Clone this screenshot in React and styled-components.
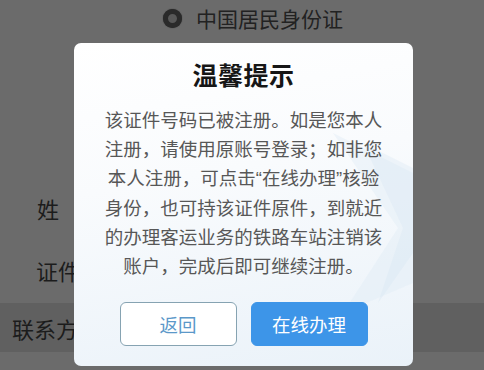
import React from 'react';
import styled, { createGlobalStyle } from 'styled-components';

const GlobalStyle = createGlobalStyle`
  html, body {
    margin: 0;
    padding: 0;
    background: #6b6b6b;
  }
  body {
    font-family: "Noto Sans CJK SC", "Noto Sans", sans-serif;
  }
`;

const Page = styled.div`
  position: relative;
  width: 484px;
  height: 370px;
  overflow: hidden;
  background: #6b6b6b;
`;

const RadioRow = styled.div`
  height: 36px;
  display: flex;
  align-items: center;
  gap: 14px;
  padding-left: 163px;
  color: #222;
  font-size: 21px;
`;

const RadioDot = styled.span`
  width: 9px;
  height: 9px;
  border-radius: 50%;
  border: 5px solid #2a2a2a;
  background: #585858;
  box-shadow: 0 0 1px #222;
`;

const Form = styled.div`
  padding-top: 141px;
  display: flex;
  flex-direction: column;
`;

const FieldRow = styled.div`
  height: ${({ $band }) => ($band ? '49px' : '62px')};
  display: flex;
  align-items: center;
  padding-left: ${({ $indent }) => $indent}px;
  font-size: 22px;
  color: #1c1c1c;
  background: ${({ $band }) => ($band ? '#606060' : 'transparent')};
  margin-top: ${({ $band }) => ($band ? '2px' : '0')};
`;

const Dialog = styled.div`
  position: absolute;
  left: 74px;
  top: 43px;
  width: 339px;
  height: 323px;
  box-sizing: border-box;
  border-radius: 7px;
  overflow: hidden;
  background: linear-gradient(170deg, #ffffff 0%, #f9fbfd 40%, #eaf2f9 100%);
  padding: 16px 0 20px;
  display: flex;
  flex-direction: column;
  align-items: center;
`;

const Watermark = styled.svg`
  position: absolute;
  right: 0;
  top: 90px;
  width: 110px;
  height: 180px;
  pointer-events: none;
`;

const DialogTitle = styled.div`
  position: relative;
  font-size: 25px;
  font-weight: 700;
  line-height: 30px;
  color: #161616;
  letter-spacing: 0.5px;
`;

const DialogText = styled.div`
  position: relative;
  margin-top: 16px;
  font-size: 18.5px;
  line-height: 29px;
  color: #575757;
  text-align: center;
  white-space: nowrap;
`;

const Quote = styled.span`
  font-family: "Liberation Sans", sans-serif;
`;

const Buttons = styled.div`
  position: relative;
  margin-top: auto;
  display: flex;
  gap: 14px;
`;

const Button = styled.div`
  width: 117px;
  height: 44px;
  box-sizing: border-box;
  border-radius: 6px;
  display: flex;
  align-items: center;
  justify-content: center;
  font-size: 18.5px;
  ${({ $primary }) =>
    $primary
      ? 'background: #3d95e8; color: #ffffff; border: 1px solid #3d95e8;'
      : 'background: #ffffff; color: #5b98c9; border: 1.5px solid #86a3b2;'}
`;

export default function App() {
  return (
    <>
      <GlobalStyle />
      <Page>
        <RadioRow>
          <RadioDot />
          中国居民身份证
        </RadioRow>
        <Form>
          <FieldRow $indent={37}>姓　　名</FieldRow>
          <FieldRow $indent={36}>证件号码</FieldRow>
          <FieldRow $indent={12} $band>
            联系方式
          </FieldRow>
        </Form>
        <Dialog>
          <Watermark viewBox="0 0 110 180">
            <path d="M30 0 L110 40 L110 150 L40 180 L95 95 Z" fill="#dfeaf5" opacity="0.4" />
            <path d="M60 10 L110 35 L110 120 L75 170 L100 95 Z" fill="#d3e3f2" opacity="0.3" />
          </Watermark>
          <DialogTitle>温馨提示</DialogTitle>
          <DialogText>
            <div>该证件号码已被注册。如是您本人</div>
            <div>注册，请使用原账号登录；如非您</div>
            <div>
              本人注册，可点击<Quote>“</Quote>在线办理<Quote>”</Quote>核验
            </div>
            <div>身份，也可持该证件原件，到就近</div>
            <div>的办理客运业务的铁路车站注销该</div>
            <div>账户，完成后即可继续注册。</div>
          </DialogText>
          <Buttons>
            <Button>返回</Button>
            <Button $primary>在线办理</Button>
          </Buttons>
        </Dialog>
      </Page>
    </>
  );
}
